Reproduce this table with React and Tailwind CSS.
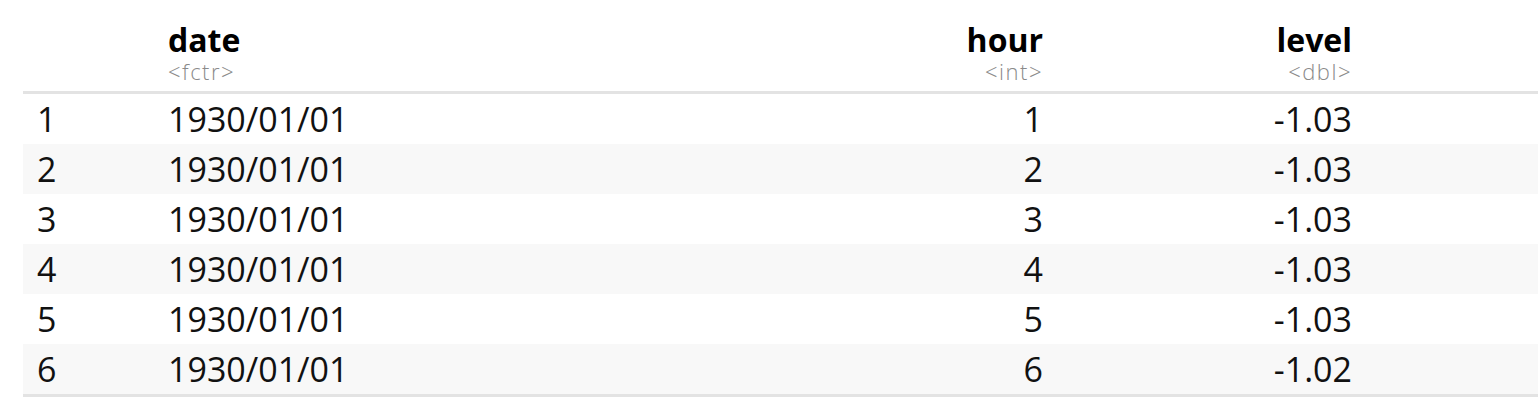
import React from 'react';

const rows = [
  { id: 1, date: '1930/01/01', hour: 1, level: '-1.03' },
  { id: 2, date: '1930/01/01', hour: 2, level: '-1.03' },
  { id: 3, date: '1930/01/01', hour: 3, level: '-1.03' },
  { id: 4, date: '1930/01/01', hour: 4, level: '-1.03' },
  { id: 5, date: '1930/01/01', hour: 5, level: '-1.03' },
  { id: 6, date: '1930/01/01', hour: 6, level: '-1.02' },
];

function HeadCell({ name, type, align }) {
  return (
    <th className={`pt-[24px] pb-[9px] px-[13px] align-bottom font-normal ${align}`}>
      <div className="text-[32px] leading-[32px] font-bold text-black">{name}</div>
      <div className="mt-[4px] text-[22px] leading-[22px] font-light tracking-[1.5px] text-[#8a8a8a]">{type}</div>
    </th>
  );
}

export default function App() {
  return (
    <div className="bg-white w-[1538px] h-[417px] overflow-hidden pl-[23px] font-['Open_Sans',sans-serif] text-[#111]">
      <table className="table-fixed border-collapse w-[1515px]">
        <colgroup>
          <col className="w-[132px]" />
          <col className="w-[500px]" />
          <col className="w-[401px]" />
          <col className="w-[309px]" />
          <col />
        </colgroup>
        <thead>
          <tr className="border-b-[3px] border-[#e3e3e3]">
            <th className="px-[14px]" />
            <HeadCell name="date" type="<fctr>" align="text-left" />
            <HeadCell name="hour" type="<int>" align="text-right" />
            <HeadCell name="level" type="<dbl>" align="text-right" />
            <th />
          </tr>
        </thead>
        <tbody className="border-b-[3px] border-[#e3e3e3]">
          {rows.map((r) => (
            <tr key={r.id} className={`h-[50px] text-[34px] leading-[50px] font-normal ${r.id % 2 === 0 ? 'bg-[#f8f8f8]' : 'bg-white'}`}>
              <td className="px-[14px] text-left">{r.id}</td>
              <td className="px-[13px] text-left">{r.date}</td>
              <td className="px-[13px] text-right">{r.hour}</td>
              <td className="px-[13px] text-right">{r.level}</td>
              <td />
            </tr>
          ))}
        </tbody>
      </table>
    </div>
  );
}
